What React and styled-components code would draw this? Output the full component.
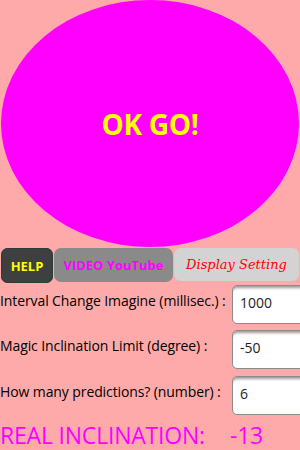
import React from "react";
import styled, { createGlobalStyle } from "styled-components";

const Global = createGlobalStyle`
  html, body { margin: 0; padding: 0; background: #ffaaaa; overflow: hidden; }
  body { font-family: "Open Sans", "DejaVu Sans", sans-serif; }
`;

const Page = styled.div`
  width: 300px;
  height: 450px;
  background: #ffaaaa;
  display: flex;
  flex-direction: column;
  overflow: hidden;
`;

const Oval = styled.div`
  flex: 0 0 247px;
  width: 298px;
  margin: 0 1px;
  border-radius: 50%;
  background: #ff00ff;
  display: flex;
  align-items: center;
  justify-content: center;
  color: #ffff00;
  font-weight: 700;
  font-size: 28px;
  letter-spacing: -0.3px;
  padding-top: 1px;
  box-sizing: border-box;
`;

const ButtonRow = styled.div`
  display: flex;
  height: 36px;
  padding: 1px 1px 0 1px;
  gap: 1px;
`;

const Btn = styled.div`
  flex: ${(p) => p.$flex};
  height: ${(p) => p.$h}px;
  border-radius: 7px;
  background: ${(p) => p.$bg};
  color: ${(p) => p.$color};
  display: flex;
  align-items: center;
  justify-content: center;
  font-size: ${(p) => p.$size}px;
  font-weight: ${(p) => p.$weight};
  font-style: ${(p) => (p.$italic ? "italic" : "normal")};
  font-family: ${(p) => (p.$serif ? '"DejaVu Serif", serif' : '"Open Sans", sans-serif')};
  box-shadow: ${(p) => (p.$outline ? "inset 0 0 0 1px #2c3c3a" : "none")};
`;

const Row = styled.div`
  display: flex;
  align-items: flex-start;
  height: 46px;
`;

const Label = styled.div`
  flex: 0 0 232px;
  font-size: 14px;
  font-weight: 500;
  color: #000;
  line-height: 18px;
  padding-top: 8px;
  white-space: nowrap;
  letter-spacing: -0.1px;
`;

const Input = styled.div`
  flex: 0 0 90px;
  margin-top: 1px;
  height: 39px;
  background: #fff;
  border: 1px solid #8a8a8a;
  border-radius: 5px;
  box-shadow: inset 0 4px 3px -2px #9a9a9a;
  font-size: 14px;
  color: #222;
  padding: 8px 0 0 7px;
  box-sizing: border-box;
  line-height: 18px;
`;

const Real = styled.div`
  display: flex;
  gap: 25px;
  color: #ff00ff;
  font-size: 23px;
  line-height: 30px;
  white-space: nowrap;
  letter-spacing: -0.2px;
`;

export default function App() {
  return (
    <Page>
      <Global />
      <Oval>OK GO!</Oval>
      <ButtonRow>
        <Btn $flex="0 0 52px" $h={35} $bg="#3e403f" $color="#ffff00" $size={13} $weight={700} $outline>HELP</Btn>
        <Btn $flex="0 0 119px" $h={34} $bg="#8a8a8a" $color="#ff00ff" $size={13} $weight={700}>VIDEO YouTube</Btn>
        <Btn $flex="1" $h={33} $bg="#d3d3d3" $color="#ff0000" $size={13} $weight={400} $italic $serif>Display Setting</Btn>
      </ButtonRow>
      <Row>
        <Label>Interval Change Imagine (millisec.) :</Label>
        <Input>1000</Input>
      </Row>
      <Row>
        <Label>Magic Inclination Limit (degree) :</Label>
        <Input>-50</Input>
      </Row>
      <Row>
        <Label>How many predictions? (number) :</Label>
        <Input>6</Input>
      </Row>
      <Real>
        <span>REAL INCLINATION:</span>
        <span>-13</span>
      </Real>
    </Page>
  );
}
